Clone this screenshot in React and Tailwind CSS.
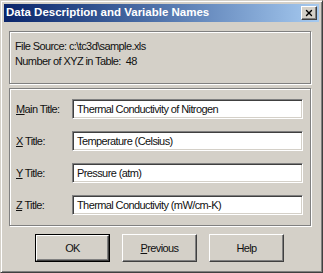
import { X } from 'lucide-react';

const font = { fontFamily: "'Liberation Sans', Arial, sans-serif" };

const fields = [
  { key: 'M', rest: 'ain Title:', value: 'Thermal Conductivity of Nitrogen' },
  { key: 'X', rest: ' Title:', value: 'Temperature (Celsius)' },
  { key: 'Y', rest: ' Title:', value: 'Pressure (atm)' },
  { key: 'Z', rest: ' Title:', value: 'Thermal Conductivity (mW/cm-K)' },
];

function Btn({ children, isDefault }) {
  const bevel =
    'w-full h-full flex items-center justify-center border border-t-white border-l-white border-r-[#404040] border-b-[#404040] shadow-[inset_-1px_-1px_0_#808080]';
  return (
    <div className={`w-[75px] h-[28px] ${isDefault ? 'border border-black' : ''}`}>
      <div className={bevel}>{children}</div>
    </div>
  );
}

export default function App() {
  return (
    <div
      className="w-[323px] h-[273px] bg-[#d4d0c8] border border-t-[#d4d0c8] border-l-[#d4d0c8] border-r-[#404040] border-b-[#404040] shadow-[inset_1px_1px_0_#fff,inset_-1px_-1px_0_#808080] p-[3px] text-[11px] tracking-[-0.6px] text-[#111] flex flex-col"
      style={font}
    >
      {/* Title bar */}
      <div className="h-[18px] flex items-center justify-between bg-gradient-to-r from-[#0a246a] to-[#a6caf0] pl-[2px] pr-[2px]">
        <span className="text-white font-bold text-[11.5px] tracking-normal leading-none">Data Description and Variable Names</span>
        <div className="w-[16px] h-[14px] bg-[#d4d0c8] border border-t-white border-l-white border-r-[#404040] border-b-[#404040] shadow-[inset_-1px_-1px_0_#808080] flex items-center justify-center">
          <X size={10} strokeWidth={3.2} className="text-black" />
        </div>
      </div>

      {/* Client area */}
      <div className="flex-1 flex flex-col px-[5px] pt-[9px]">
        <div className="w-[302px] h-[53px] border border-[#808080] shadow-[inset_1px_1px_0_#fff,1px_1px_0_#fff] pl-[5px] pt-[7px] leading-[15px]">
          <div>File Source: c:\tc3d\sample.xls</div>
          <div>Number of XYZ in Table:&nbsp; 48</div>
        </div>

        <div className="mt-[4px] w-[302px] h-[138px] border border-[#808080] shadow-[inset_1px_1px_0_#fff,1px_1px_0_#fff] pl-[6px] pr-[7px] pt-[10px] flex flex-col gap-[12px]">
          {fields.map((f) => (
            <div key={f.key} className="flex items-center justify-between h-[20px]">
              <span>
                <u>{f.key}</u>
                {f.rest}
              </span>
              <div className="w-[231px] h-[20px] bg-white border border-t-[#808080] border-l-[#808080] border-r-white border-b-white shadow-[inset_1px_1px_0_#404040,inset_-1px_-1px_0_#d4d0c8] pl-[4px] flex items-center">
                {f.value}
              </div>
            </div>
          ))}
        </div>

        <div className="mt-[8px] flex pl-[26px] gap-[12px]">
          <Btn isDefault>OK</Btn>
          <Btn>
            <span>
              <u>P</u>revious
            </span>
          </Btn>
          <Btn>Help</Btn>
        </div>
      </div>
    </div>
  );
}
